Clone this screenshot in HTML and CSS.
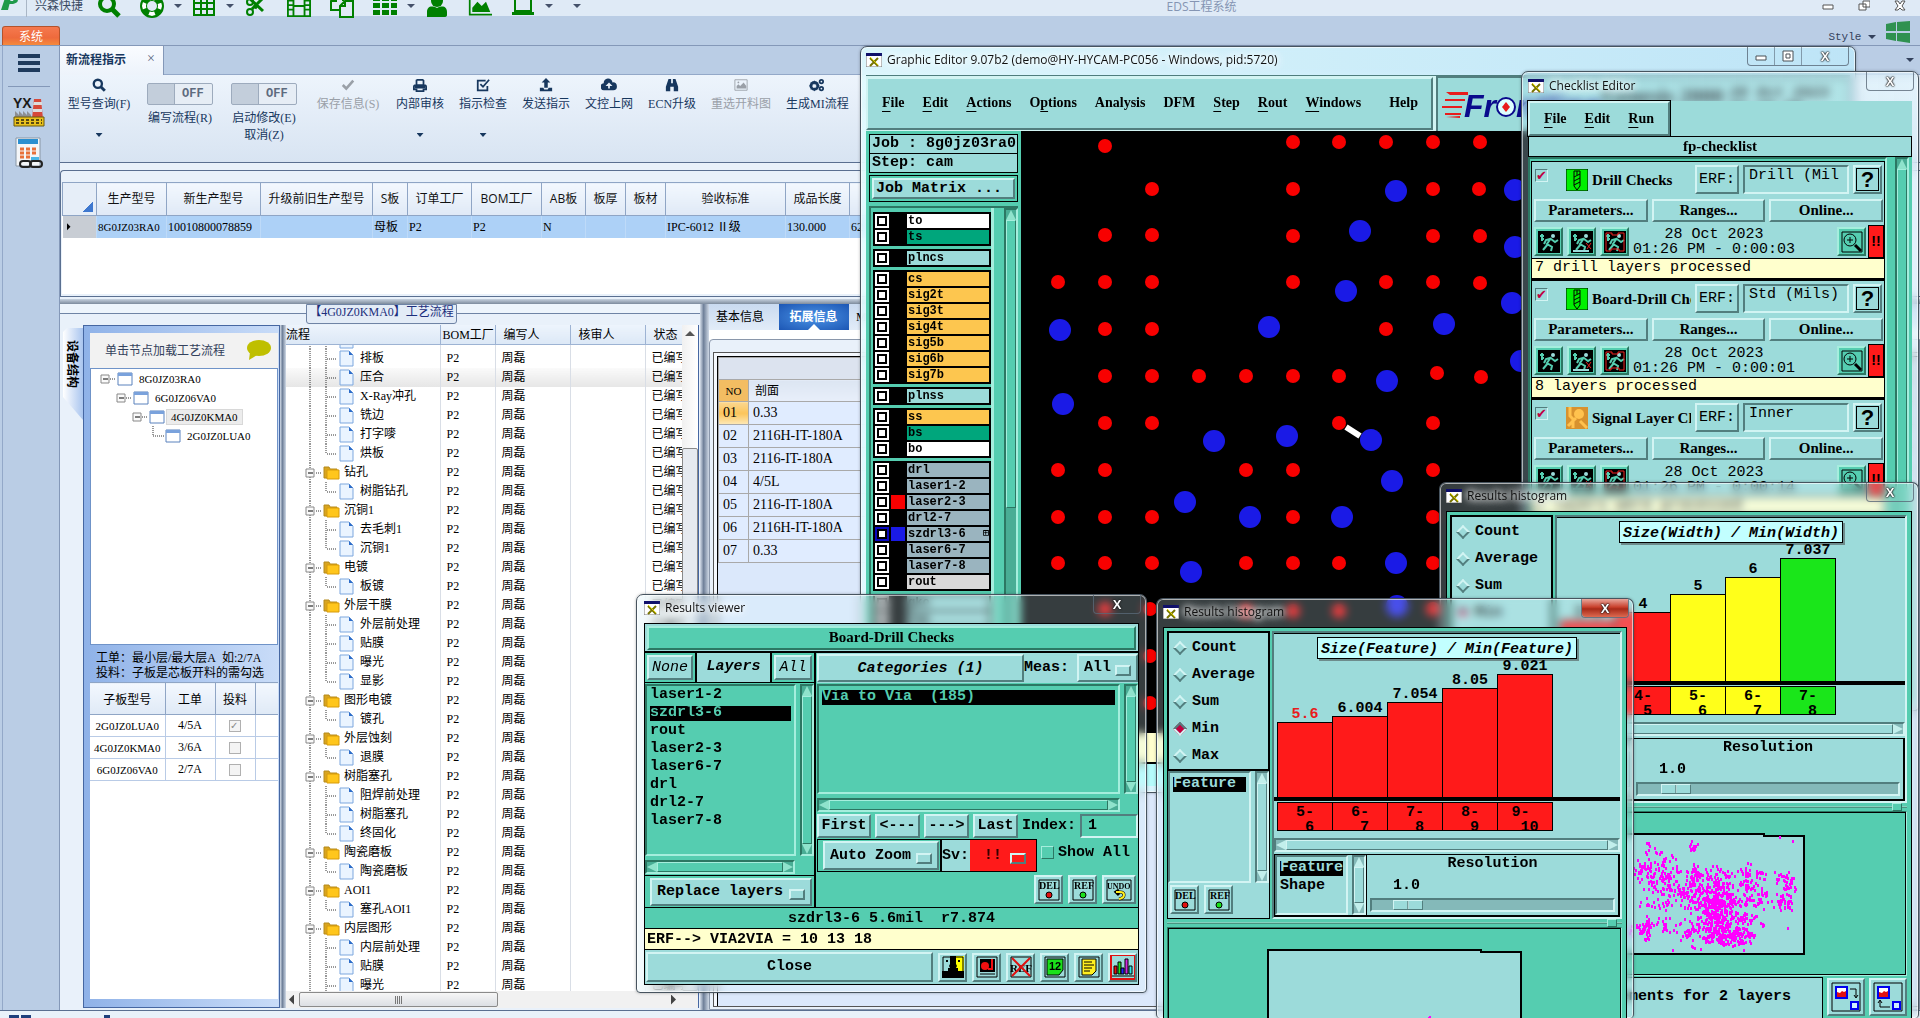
FILE: index.html
```html
<!DOCTYPE html>
<html lang="zh-CN">
<head>
    <meta charset="UTF-8">
    <meta name="viewport" content="width=device-width, initial-scale=1.0">
    <title>EDS工程系统</title>
    <link rel="stylesheet" href="styles.css">
</head>
<body>
    <svg class="sprite" aria-hidden="true">
        <symbol id="i-search" viewBox="0 0 24 24"><circle cx="10" cy="10" r="7" fill="none" stroke="currentColor" stroke-width="4"/><path d="M15 15l7 7" stroke="currentColor" stroke-width="5"/></symbol>
        <symbol id="i-ring" viewBox="0 0 24 24"><circle cx="12" cy="12" r="8" fill="none" stroke="currentColor" stroke-width="6"/><circle cx="12" cy="12" r="8" fill="none" stroke="#fff" stroke-width="4" stroke-dasharray="6 6.57" stroke-dashoffset="3"/><circle cx="12" cy="12" r="11" fill="none" stroke="currentColor" stroke-width="2"/></symbol>
        <symbol id="i-table" viewBox="0 0 24 24"><path d="M2 3h20v18H2zM2 9h20M2 15h20M9 3v18M15 3v18" fill="none" stroke="currentColor" stroke-width="2"/></symbol>
        <symbol id="i-cut" viewBox="0 0 24 24"><path d="M4 3l15 14M20 3L8 15M9 12l4 2" fill="none" stroke="currentColor" stroke-width="3"/><circle cx="6" cy="18" r="3" fill="none" stroke="currentColor" stroke-width="2"/><circle cx="6" cy="8" r="3" fill="none" stroke="currentColor" stroke-width="2"/></symbol>
        <symbol id="i-film" viewBox="0 0 26 24"><path d="M1 1h24v22H1zM7 1v22M19 1v22M7 12h12M1 6h6M1 11h6M1 16h6M19 6h6M19 11h6M19 16h6" fill="none" stroke="currentColor" stroke-width="2"/></symbol>
        <symbol id="i-copy" viewBox="0 0 24 24"><path d="M9 16H1V7l5-5h7v5M6 2v5H1M10 12l5-5h8v16H10zM15 7v5h-5" fill="none" stroke="currentColor" stroke-width="2"/></symbol>
        <symbol id="i-grid" viewBox="0 0 24 24"><path d="M0 2h7v5H0zM9 2h7v5H9zM18 2h6v5h-6zM0 9h7v5H0zM9 9h7v5H9zM18 9h6v5h-6zM0 16h7v5H0zM9 16h7v5H9zM18 16h6v5h-6z" fill="currentColor"/></symbol>
        <symbol id="i-user" viewBox="0 0 24 24"><circle cx="12" cy="7" r="6" fill="currentColor"/><path d="M2 23v-5c0-5 4-7 10-4c6-3 10-1 10 4v3q0 2-3 2z" fill="currentColor"/></symbol>
        <symbol id="i-chart" viewBox="0 0 28 24"><path d="M2 0v22h26" fill="none" stroke="currentColor" stroke-width="2"/><path d="M5 19v-5l6-7 5 5 5-5 5 12z" fill="currentColor"/></symbol>
        <symbol id="i-laptop" viewBox="0 0 24 24"><path d="M4 2h16v15H4z" fill="none" stroke="currentColor" stroke-width="2"/><path d="M1 18h22v3H1z" fill="currentColor"/></symbol>
        <symbol id="i-check" viewBox="0 0 16 16"><path d="M2 8l4 4 8-9" fill="none" stroke="currentColor" stroke-width="3"/></symbol>
        <symbol id="i-print" viewBox="0 0 16 16"><path d="M4 2h7l1 1v5M4 8V2M3 8h10q2 0 2 2v3h-3v2H4v-2H1v-3q0-2 2-2z" fill="none" stroke="currentColor" stroke-width="2"/><path d="M2 8h12v4H2z" fill="currentColor"/></symbol>
        <symbol id="i-tick" viewBox="0 0 16 16"><path d="M13 9v5H2V3h9" fill="none" stroke="currentColor" stroke-width="2"/><path d="M5 7l3 3 7-8" fill="none" stroke="currentColor" stroke-width="2"/></symbol>
        <symbol id="i-up" viewBox="0 0 16 16"><path d="M8 0l5 5h-3v6H6V5H3zM1 11h4l1 2h4l1-2h4v4H1z" fill="currentColor"/></symbol>
        <symbol id="i-cloud" viewBox="0 0 18 16"><path d="M4 14a4 4 0 0 1-1-8a5 5 0 0 1 10-1a4 4 0 0 1 1 9z" fill="currentColor"/><path d="M9 5l4 4h-3v3H8V9H5z" fill="#e8f0f9"/></symbol>
        <symbol id="i-bino" viewBox="0 0 16 16"><path d="M4 1h3v5h2V1h3l3 9v5h-5v-5H6v5H1v-5z" fill="currentColor"/></symbol>
        <symbol id="i-image" viewBox="0 0 16 16"><path d="M1 2h14v12H1z" fill="none" stroke="currentColor"/><path d="M3 12V9l2-2 2 2 4-4 3 4v3z" fill="currentColor"/><circle cx="5" cy="5" r="1" fill="currentColor"/></symbol>
        <symbol id="i-gears" viewBox="0 0 18 16"><circle cx="6" cy="9" r="4" fill="none" stroke="currentColor" stroke-width="3"/><path d="M6 3v12M0 9h12M2 5l8 8M10 5l-8 8" stroke="currentColor"/><circle cx="6" cy="9" r="2" fill="#e8f0f9"/><circle cx="14" cy="4" r="2" fill="none" stroke="currentColor" stroke-width="2"/><circle cx="14" cy="12" r="2" fill="none" stroke="currentColor" stroke-width="2"/></symbol>
        <symbol id="i-x" viewBox="0 0 16 14"><path d="M0 0h16v14H0z" fill="#fff" stroke="#777"/><path d="M0 0h16v3H0z" fill="#10106a"/><path d="M4 5l8 8M12 5l-8 8" stroke="#777400" stroke-width="2"/><path d="M4 4l8 8" stroke="#ddd200"/></symbol>
        <symbol id="i-file" viewBox="0 0 15 17"><path d="M1 1h9l4 4v11H1z" fill="#eaf4ff" stroke="#7da7de"/><path d="M10 1v4h4z" fill="#2d6cc8"/></symbol>
        <symbol id="i-folder" viewBox="0 0 17 15"><path d="M1 2h5l1 2h7v9H1z" fill="#d9a520" stroke="#b58a1c"/><path d="M4 5h12v9H4z" fill="#ffc61c" stroke="#d79b0a"/></symbol>
        <symbol id="i-form" viewBox="0 0 16 14"><path d="M1 1h14v12H1z" fill="#fff" stroke="#5a82bd"/><path d="M1 1h14v3H1z" fill="#7aa2dc"/></symbol>
        <symbol id="t-node" viewBox="0 0 36 19"><path d="M24 0v19M30 10h7" stroke="#333" stroke-dasharray="1 1" fill="none"/><path d="M20 6h8v8h-8z" fill="#fafafa" stroke="#888"/><path d="M22 10h5" stroke="#000"/></symbol>
        <symbol id="t-tee" viewBox="0 0 53 19"><path d="M24 0v19M40 0v19M41 10h10" stroke="#333" stroke-dasharray="1 1" fill="none"/></symbol>
        <symbol id="t-end" viewBox="0 0 53 19"><path d="M24 0v19M40 0v10M41 10h10" stroke="#333" stroke-dasharray="1 1" fill="none"/></symbol>
        <symbol id="t-box" viewBox="0 0 16 19"><path d="M10 10h6" stroke="#333" stroke-dasharray="1 1"/><path d="M1 6h8v8H1z" fill="#fafafa" stroke="#888"/><path d="M3 10h5" stroke="#000"/></symbol>
        <symbol id="t-leaf" viewBox="0 0 16 19"><path d="M5 0v10h11" fill="none" stroke="#333" stroke-dasharray="1 1"/></symbol>
        <symbol id="m-drill" viewBox="0 0 22 22"><path d="M0 0h22v22H0z" fill="#00f000" stroke="#000"/><path d="M8 2h6v15l-3 4-3-4zM8 8l6-3M8 12l6-3M8 16l6-3M11 2v4" fill="#00f000" stroke="#000"/></symbol>
        <symbol id="m-signal" viewBox="0 0 22 22"><path d="M0 0h22v22H0z" fill="#d8922e"/><circle cx="13" cy="7" r="5" fill="#ffc24e"/><path d="M4 0v9l3 3v9M10 11l-8 8M14 14l7 7" fill="none" stroke="#ffc24e" stroke-width="3"/></symbol>
        <symbol id="m-run" viewBox="0 0 22 22"><path d="M0 0h22v22H0z"/><circle cx="15" cy="5" r="2" fill="#9cdbda"/><path d="M13 7l-4 6 5 3-1 4M10 13l-5 6M13 8l4 3 3-2M12 8L8 9l-2 4M2 5h4M3 8h3M4 3v7" fill="none" stroke="#55cdb0" stroke-width="2"/></symbol>
        <symbol id="m-run2" viewBox="0 0 22 22"><use href="#m-run"/><path d="M2 20h16" stroke="#9cdbda" stroke-width="2"/><path d="M15 12l5 6M20 12l-4 6" stroke="#e02020"/></symbol>
        <symbol id="m-run3" viewBox="0 0 22 22"><use href="#m-run"/><path d="M2 2h6v2h6V2h6v18h-5v-2H7v2H2z" fill="none" stroke="#f02020"/></symbol>
        <symbol id="m-zoom" viewBox="0 0 22 22"><path d="M1 1h20v20H1z" fill="none" stroke="#000"/><circle cx="9" cy="9" r="6" fill="none" stroke="#000"/><path d="M9 6v6M6 9h6" stroke="#000"/><path d="M14 14l6 6" stroke="#000" stroke-width="3"/></symbol>
        <symbol id="m-face" viewBox="0 0 22 22"><path d="M0 0h22v22H0z" fill="#9cdbda"/><path d="M14 0h8v16h-8z" fill="#ff0"/><path d="M8 0h6v8l1 2-1 2h2v3h6v7H0v-7h6v-3h2l-1-2 1-2z"/><path d="M1 1h20v20H1z" fill="none" stroke="#000"/><path d="M4 5h2M16 5h2" stroke="#000" stroke-width="2"/></symbol>
        <symbol id="m-pane" viewBox="0 0 22 22"><path d="M1 1h20v20H1z" fill="none" stroke="#000"/><path d="M4 3h15v13H4z"/><circle cx="9" cy="10" r="4" fill="#f01010"/><path d="M16 3v10h-4" stroke="#f01010" stroke-width="2" fill="none"/><path d="M4 18h15" stroke="#000"/></symbol>
        <symbol id="m-noref" viewBox="0 0 22 22"><path d="M1 1h20v20H1z" fill="none" stroke="#000"/><text x="0" y="16" font-family="Liberation Serif" font-size="11">REF</text><path d="M2 2l18 18M20 2L2 20" stroke="#e01010" stroke-width="2"/></symbol>
        <symbol id="m-12" viewBox="0 0 22 22"><path d="M1 1h20v20H1z" fill="none" stroke="#000"/><path d="M3 3h16v11l-4 5H3z" fill="#1be01b" stroke="#000"/><text x="5" y="14" font-family="Liberation Sans" font-weight="bold" font-size="11">12</text></symbol>
        <symbol id="m-note" viewBox="0 0 22 22"><path d="M1 1h20v20H1z" fill="none" stroke="#000"/><path d="M4 3h14v12l-4 4H4z" fill="#ffef20" stroke="#000"/><path d="M6 6h8M6 9h10M6 12h8M6 15h6" stroke="#000"/></symbol>
        <symbol id="m-bars" viewBox="0 0 22 22"><path d="M0 0h22v22H0z" fill="#9cdbda"/><path d="M2 10h3v8H2z" fill="#e01010" stroke="#000"/><path d="M6 6h3v12H6z" fill="#1be01b" stroke="#000"/><path d="M9 12h3v6H9z" fill="#22f" stroke="#000"/><path d="M13 3h3v15h-3z" fill="#d02be0" stroke="#000"/><path d="M17 10h3v8h-3z" fill="#2ee6e6" stroke="#000"/><path d="M0 20h22" stroke="#000"/></symbol>
        <symbol id="m-del" viewBox="0 0 22 22"><path d="M1 1h20v20H1z" fill="none" stroke="#000"/><text x="1" y="10" font-family="Liberation Serif" font-size="10">DEL</text><circle cx="11" cy="16" r="3" fill="#e01010" stroke="#000"/></symbol>
        <symbol id="m-ref" viewBox="0 0 22 22"><path d="M1 1h20v20H1z" fill="none" stroke="#000"/><text x="2" y="10" font-family="Liberation Serif" font-size="10">REF</text><circle cx="11" cy="16" r="3" fill="#1be01b" stroke="#000"/></symbol>
        <symbol id="m-undo" viewBox="0 0 26 22"><path d="M1 1h24v20H1z" fill="none" stroke="#000"/><text x="1" y="10" font-family="Liberation Serif" font-size="8">UNDO</text><path d="M10 13h4q4 0 4 3t-5 4M13 11l-3 2 3 3" fill="none" stroke="#000" stroke-width="3"/><path d="M10 13h4q4 0 4 3t-5 4" fill="none" stroke="#ffef20" stroke-width="2"/></symbol>
        <symbol id="m-next" viewBox="0 0 30 30"><path d="M1 1h28v28H1z" fill="none" stroke="#000"/><path d="M5 5h11v11H5z" fill="#e01010" stroke="#00e" stroke-width="2"/><path d="M6 6h9v3l-2 1-2-1-2 2-3-1z" fill="#fff"/><path d="M20 20h7v7h-7z" fill="#cfeeff" stroke="#00e" stroke-width="2"/><path d="M19 7h6v8M23 13l2 3 2-3" fill="none" stroke="#000"/></symbol>
        <symbol id="m-prev" viewBox="0 0 30 30"><path d="M1 1h28v28H1z" fill="none" stroke="#000"/><path d="M5 5h11v11H5z" fill="#e01010" stroke="#00e" stroke-width="2"/><path d="M6 6h9v3l-2 1-2-1-2 2-3-1z" fill="#fff"/><path d="M20 20h7v7h-7z" fill="#cfeeff" stroke="#00e" stroke-width="2"/><path d="M17 25H7v-6M5 21l2-3 2 3" fill="none" stroke="#000"/></symbol>
    </svg>

    <div class="app">
        <header class="quickbar">
            <svg class="logo" viewBox="0 0 20 16"><path d="M5 0h6l-3 12H1z" fill="#1f9a4a"/><path d="M10 0h7q3 4-4 6H8l1-3h4l1-2z" fill="#1f9a4a"/></svg>
            <span class="brand">兴森快捷</span>
            <button class="qb wide" aria-label="查询"><svg><use href="#i-search"/></svg></button>
            <button class="qb" aria-label="帮助"><svg><use href="#i-ring"/></svg></button>
            <button class="caret" aria-label="更多帮助"></button>
            <button class="qb" aria-label="表格"><svg><use href="#i-table"/></svg></button>
            <button class="caret" aria-label="更多表格"></button>
            <button class="qb wide" aria-label="剪切"><svg><use href="#i-cut"/></svg></button>
            <button class="qb wide" aria-label="胶片"><svg><use href="#i-film"/></svg></button>
            <button class="qb wide" aria-label="复制"><svg><use href="#i-copy"/></svg></button>
            <button class="qb" aria-label="矩阵"><svg><use href="#i-grid"/></svg></button>
            <button class="caret" aria-label="更多矩阵"></button>
            <button class="qb wide" aria-label="用户"><svg><use href="#i-user"/></svg></button>
            <button class="qb wide" aria-label="图表"><svg><use href="#i-chart"/></svg></button>
            <button class="qb" aria-label="终端"><svg><use href="#i-laptop"/></svg></button>
            <button class="caret" aria-label="更多终端"></button>
            <button class="caret more" aria-label="自定义"></button>
            <span class="app-title">EDS工程系统</span>
            <div class="app-controls">
                <button aria-label="最小化"><svg viewBox="0 0 12 12"><path d="M1 5h10v4H1z" fill="#fff" stroke="#555"/></svg></button>
                <button aria-label="还原"><svg viewBox="0 0 12 12"><path d="M5 1h7v6H5zM1 4h7v6H1z" fill="#fff" stroke="#555"/></svg></button>
                <button aria-label="关闭"><svg viewBox="0 0 12 12"><path d="M1 1h3l2 3 2-3h3L8 6l3 4H8L6 8l-2 2H1l3-4z" fill="#fff" stroke="#555"/></svg></button>
            </div>
        </header>
        <div class="caption">
            <button class="sys-tab">系统</button>
            <span class="style-menu">Style <i class="down"></i></span>
            <svg class="win-logo" viewBox="0 0 24 22"><path d="M0 3l10-2v9H0zM11 1l13-1v10H11zM0 12h10v8L0 18zM11 12h13v10l-13-2z" fill="#2f9150"/></svg>
        </div>
        <div class="workspace">
            <nav class="sidebar">
                <button class="burger" aria-label="菜单"></button>
                <hr>
                <button aria-label="工厂"><svg viewBox="0 0 32 32"><path d="M21 4h7l2 20H19z" fill="#d6493a"/><path d="M21 7h8v3h-9zM20 14h9v3h-9z" fill="#ddd"/><path d="M2 24v-8l4 4v-4l4 4v-4l4 4v-4l4 4v4z" fill="#8d8f94"/><path d="M1 22h30v9H1z" fill="#e9c11b" stroke="#6a5a10"/><path d="M3 25h26M3 28h26" stroke="#5a4a10" stroke-dasharray="3 2" stroke-width="2"/><text x="0" y="13" font-family="Liberation Sans" font-weight="bold" font-size="14" fill="#1a1a1a">YX</text></svg></button>
                <button aria-label="计划"><svg viewBox="0 0 32 32"><path d="M3 1h24v28H3z" fill="#f4f6f8" stroke="#8a97a5"/><path d="M5 2h20v5H5z" fill="#2b8fd0"/><path d="M7 12h18M7 16h18M7 20h10" stroke="#e8703a" stroke-width="3" stroke-dasharray="4 2"/><path d="M18 20h8v5h-8z" fill="#49b6e8"/><rect x="7" y="24" width="11" height="6" rx="3" fill="none" stroke="#222" stroke-width="2"/><rect x="17" y="24" width="12" height="6" rx="3" fill="none" stroke="#222" stroke-width="2"/></svg></button>
            </nav>
            <main class="main">
                <div class="doc-tabs">
                    <div class="doc-tab"><b>新流程指示</b><button aria-label="关闭标签">×</button></div>
                    <i class="down"></i>
                </div>
                <div class="ribbon">
                    <button class="rb dd long"><svg><use href="#i-search"/></svg>型号查询(F)</button>
                    <label class="rb sw"><input type="checkbox"><span class="switch">OFF</span>编写流程(R)</label>
                    <label class="rb sw second"><input type="checkbox"><span class="switch">OFF</span>启动修改(E)<br>取消(Z)</label>
                    <button class="rb long" disabled><svg><use href="#i-check"/></svg>保存信息(S)</button>
                    <button class="rb dd"><svg><use href="#i-print"/></svg>内部审核</button>
                    <button class="rb dd"><svg><use href="#i-tick"/></svg>指示检查</button>
                    <button class="rb"><svg><use href="#i-up"/></svg>发送指示</button>
                    <button class="rb"><svg><use href="#i-cloud"/></svg>文控上网</button>
                    <button class="rb"><svg><use href="#i-bino"/></svg>ECN升级</button>
                    <button class="rb" disabled><svg><use href="#i-image"/></svg>重选开料图</button>
                    <button class="rb"><svg><use href="#i-gears"/></svg>生成MI流程</button>
                    <button class="rb"><svg></svg>MI</button>
                </div>
                <section class="models">
                    <div class="models-box">
                        <table class="model-table">
                            <thead>
                                <tr><th class="corner"></th><th>生产型号</th><th>新生产型号</th><th>升级前旧生产型号</th><th>S板</th><th>订单工厂</th><th>BOM工厂</th><th>AB板</th><th>板厚</th><th>板材</th><th>验收标准</th><th>成品长度</th><th></th></tr>
                            </thead>
                            <tbody>
                                <tr><td class="mark"><i></i></td><td class="code">8G0JZ03RA0</td><td>10010800078859</td><td></td><td>母板</td><td>P2</td><td>P2</td><td>N</td><td></td><td></td><td>IPC-6012 Ⅱ级</td><td>130.000</td><td>62</td></tr>
                            </tbody>
                        </table>
                    </div>
                </section>
                <div class="hsplit"></div>
                <div class="lower">
                    <section class="flow">
                        <h2 class="flow-title">【4G0JZ0KMA0】工艺流程</h2>
                        <div class="flow-row">
                            <div class="vtab">设备结构</div>
                            <div class="device">
                                <div class="device-head"><span>单击节点加载工艺流程</span><svg viewBox="0 0 24 20"><ellipse cx="12" cy="8" rx="12" ry="8" fill="#bfbf00"/><path d="M3 12l-1 8 8-5z" fill="#bfbf00"/></svg></div>
                                <ul class="device-tree">
                                    <li><svg class="knot"><use href="#t-box"/></svg><svg class="form"><use href="#i-form"/></svg><span>8G0JZ03RA0</span></li>
                                    <li class="d1"><svg class="knot"><use href="#t-box"/></svg><svg class="form"><use href="#i-form"/></svg><span>6G0JZ06VA0</span></li>
                                    <li class="d2"><svg class="knot"><use href="#t-box"/></svg><svg class="form"><use href="#i-form"/></svg><span class="on">4G0JZ0KMA0</span></li>
                                    <li class="d3"><svg class="knot"><use href="#t-leaf"/></svg><svg class="form"><use href="#i-form"/></svg><span>2G0JZ0LUA0</span></li>
                                </ul>
                                <p class="hint">工单：最小层/最大层A&nbsp; 如:2/7A<br>投料：子板是芯板开料的需勾选</p>
                                <div class="sub-box">
                                    <table class="sub-table">
                                        <thead><tr><th>子板型号</th><th>工单</th><th>投料</th><th></th></tr></thead>
                                        <tbody>
                                            <tr><td class="code">2G0JZ0LUA0</td><td>4/5A</td><td><input type="checkbox" checked disabled aria-label="投料"></td><td></td></tr>
                                            <tr><td class="code">4G0JZ0KMA0</td><td>3/6A</td><td><input type="checkbox" disabled aria-label="投料"></td><td></td></tr>
                                            <tr><td class="code">6G0JZ06VA0</td><td>2/7A</td><td><input type="checkbox" disabled aria-label="投料"></td><td></td></tr>
                                        </tbody>
                                    </table>
                                </div>
                            </div>
                            <div class="vsplit thin"></div>
                            <div class="process">
                                <div class="process-view">
                                    <table class="process-table">
                                        <thead><tr><th>流程</th><th>BOM工厂</th><th>编写人</th><th>核审人</th><th>状态</th></tr></thead>
                                        <tbody id="process-rows"></tbody>
                                    </table>
                                    <div class="vbar"><i></i></div>
                                </div>
                                <div class="hbar"><i class="l"></i><b></b><i class="r"></i></div>
                            </div>
                        </div>
                    </section>
                    <div class="vsplit"></div>
                    <section class="extra">
                        <div class="tabs"><button>基本信息</button><button class="on">拓展信息</button><button>M</button></div>
                        <div class="extra-frame">
                            <div class="extra-box">
                                <table class="stack-table">
                                    <colgroup><col class="no-col"><col></colgroup>
                                    <thead><tr class="blank"><th colspan="2"></th></tr><tr><th class="no">NO</th><th>剖面</th></tr></thead>
                                    <tbody id="stack-rows"></tbody>
                                </table>
                            </div>
                        </div>
                    </section>
                </div>
            </main>
        </div>
        <footer class="statusbar"><i></i><i></i><i class="gap"></i></footer>
    </div>

    <!-- Graphic Editor -->
    <div class="win editor">
        <div class="titlebar"><svg><use href="#i-x"/></svg><span>Graphic Editor 9.07b2 (demo@HY-HYCAM-PC056 - Windows, pid:5720)</span>
            <div class="controls"><button aria-label="Minimize"><svg viewBox="0 0 14 14"><path d="M2 7h10v4H2z" fill="#fff" stroke="#4b5157"/></svg></button><button aria-label="Maximize"><svg viewBox="0 0 14 14"><path d="M2 2h10v10H2zM5 5h4v4H5z" fill="#fff" stroke="#4b5157"/></svg></button><button class="close" aria-label="Close">X</button></div>
        </div>
        <div class="win-body">
            <div class="editor-top">
                <nav class="menubar">
                    <button><u>F</u>ile</button><button><u>E</u>dit</button><button><u>A</u>ctions</button><button>O<u>p</u>tions</button><button>Analysis</button><button>DFM</button><button><u>S</u>tep</button><button><u>R</u>out</button><button><u>W</u>indows</button><button class="help">Help</button>
                </nav>
                <div class="brandbox">
                    <svg class="frontline" viewBox="0 0 160 40"><path d="M4 6h22v3H8zM3 13h20v2H3zM0 20h20v2H0zM3 27h16v2H3zM4 31l14-1v2z" fill="#e81c1c"/><text x="22" y="31" font-family="Liberation Sans" font-weight="bold" font-style="italic" font-size="32" fill="#0a0a8c">Fr</text><text x="74" y="31" font-family="Liberation Sans" font-weight="bold" font-style="italic" font-size="32" fill="#0a0a8c">ntline</text><circle cx="64" cy="21" r="9" fill="#dff" stroke="#0a0a8c" stroke-width="2"/><path d="M64 16l4 5-4 5-4-5z" fill="#e81c1c"/></svg>
                    <b>Genesis 2000</b><em>28 Oct 2023<br>01:30 PM</em>
                </div>
            </div>
            <div class="editor-mid">
                <aside class="layers">
                    <div class="info">Job : 8g0jz03ra0</div>
                    <div class="info">Step: cam</div>
                    <div class="matrix"><button>Job Matrix ...</button></div>
                    <div class="layer-area">
                        <div class="layer-list" id="layer-list"></div>
                        <div class="sb green v"><i></i></div>
                    </div>
                </aside>
                <div class="canvas"><svg id="drill-map" width="500" height="600"></svg></div>
            </div>
            <div class="editor-msg"></div>
            <div class="editor-foot"></div>
        </div>
    </div>

    <!-- Checklist Editor -->
    <div class="win checklist">
        <div class="titlebar"><svg><use href="#i-x"/></svg><span>Checklist Editor</span><div class="controls"><button class="close" aria-label="Close">X</button></div></div>
        <div class="win-body">
            <nav class="menubar short"><button><u>F</u>ile</button><button><u>E</u>dit</button><button><u>R</u>un</button></nav>
            <div class="list-name">fp-checklist</div>
            <div class="check-area">
                <div class="check-list" id="check-list"></div>
                <div class="sb green v"><i></i></div>
            </div>
        </div>
    </div>

    <div class="win hist two" id="hist-width"></div>
    <div class="win hist one" id="hist-feature"></div>

    <!-- Results viewer -->
    <div class="win results">
        <div class="titlebar"><svg><use href="#i-x"/></svg><span>Results viewer</span><div class="controls"><button class="close" aria-label="Close">X</button></div></div>
        <div class="win-body">
            <div class="banner"><div>Board-Drill Checks</div></div>
            <div class="rv-main">
                <div class="rv-left">
                    <div class="rv-head"><span class="cell"><button class="btn it">None</button></span><b>Layers</b><span class="cell"><button class="btn it">All</button></span></div>
                    <div class="scrolled">
                        <ul class="listbox"><li>laser1-2</li><li class="on">szdrl3-6</li><li>rout</li><li>laser2-3</li><li>laser6-7</li><li>drl</li><li>drl2-7</li><li>laser7-8</li></ul>
                        <div class="sb green v"><i></i></div>
                    </div>
                    <div class="sb green h"><i></i></div>
                    <div class="rv-replace"><span class="opt"><select aria-label="Layer mode"><option>Replace layers</option></select></span></div>
                </div>
                <div class="rv-right">
                    <div class="rv-head cats"><button class="btn bi">Categories (1)</button><label for="meas">Meas:</label><span class="opt"><select id="meas"><option>All</option></select></span></div>
                    <div class="scrolled">
                        <ul class="listbox"><li class="on">Via to Via&nbsp; (185)</li></ul>
                        <div class="sb green v"><i></i></div>
                    </div>
                    <div class="sb green h"><i></i></div>
                    <div class="rv-nav"><button class="btn">First</button><button class="btn">&lt;---</button><button class="btn">---&gt;</button><button class="btn">Last</button><label for="index">Index:</label><input id="index" class="field" type="text" value="1"></div>
                    <div class="rv-zoom"><span class="frame"><span class="opt"><select aria-label="Zoom"><option>Auto Zoom</option></select></span></span><span class="frame sv"><label for="sv">Sv:</label><span class="opt red"><select id="sv"><option>!!</option></select></span></span><label class="show-all"><input type="checkbox">Show All</label></div>
                    <div class="rv-icons"><button class="ib" aria-label="Delete"><svg><use href="#m-del"/></svg></button><button class="ib" aria-label="Reference"><svg><use href="#m-ref"/></svg></button><button class="ib big" aria-label="Undo"><svg><use href="#m-undo"/></svg></button></div>
                </div>
            </div>
            <div class="rv-status">szdrl3-6 5.6mil&nbsp; r7.874</div>
            <div class="rv-erf">ERF--&gt; VIA2VIA = 10 13 18</div>
            <div class="rv-foot"><button class="btn">Close</button><button class="ib" aria-label="Highlight"><svg><use href="#m-face"/></svg></button><button class="ib" aria-label="Snapshot"><svg><use href="#m-pane"/></svg></button><button class="ib" aria-label="No reference"><svg><use href="#m-noref"/></svg></button><button class="ib" aria-label="Count"><svg><use href="#m-12"/></svg></button><button class="ib" aria-label="Notes"><svg><use href="#m-note"/></svg></button><button class="ib hot" aria-label="Histogram"><svg><use href="#m-bars"/></svg></button></div>
        </div>
    </div>

    <script src="script.js"></script>
</body>
</html>
```
FILE: styles.css
```css
* {
    box-sizing: border-box;
}

html, body {
    height: 100%;
    margin: 0;
    overflow: hidden;
}

body {
    font-family: "Liberation Serif", "Noto Sans CJK SC", serif;
    font-size: 12px;
    color: #000;
    background: #dce8f8;
}

button, input, select {
    font: inherit;
    color: inherit;
    margin: 0;
    padding: 0;
    border: 0;
    background: none;
    border-radius: 0;
}

ul, p, h2 {
    margin: 0;
    padding: 0;
    list-style: none;
}

table {
    border-collapse: collapse;
    table-layout: fixed;
}

.sprite {
    display: none;
}

.code {
    font-size: 11px;
}

/* main application */
.app {
    height: 100%;
    display: flex;
    flex-direction: column;
    background: #bacde5;
}

.quickbar {
    height: 16px;
    padding-bottom: 4px;
    display: flex;
    align-items: center;
    gap: 10px;
    background: #dfeaf6;
    flex: none;
}

.logo {
    width: 20px;
    height: 16px;
}

.brand {
    border-left: 1px solid #a9b6c6;
    padding-left: 8px;
    margin: 0 4px 0 -4px;
    color: #3b4a63;
    line-height: 22px;
}

.qb {
    color: #008000;
    width: 24px;
    height: 24px;
}

.qb.wide {
    margin-right: 9px;
}

.qb svg {
    width: 24px;
    height: 24px;
    display: block;
}

.caret {
    width: 8px;
    height: 4px;
    background: #44516a;
    clip-path: polygon(0 0, 100% 0, 50% 100%);
}

.caret.more {
    margin-left: 10px;
}

.app-title {
    flex: 1;
    text-align: center;
    color: #8595b3;
    font-family: "Open Sans", "Noto Sans CJK SC", sans-serif;
}

.app-controls {
    display: flex;
    gap: 24px;
    padding-right: 14px;
}

.app-controls button, .app-controls svg {
    width: 12px;
    height: 12px;
    display: block;
}

.caption {
    height: 30px;
    display: flex;
    align-items: flex-end;
    padding: 0 10px 0 2px;
    border-bottom: 1px solid #8498b8;
    flex: none;
}

.sys-tab {
    width: 58px;
    height: 19px;
    color: #fff;
    border: 1px solid #b4532c;
    border-bottom: 0;
    border-radius: 3px 3px 0 0;
    background: linear-gradient(#f5794f, #ee6a3c 60%, #f58a3c);
}

.style-menu {
    margin-left: auto;
    color: #33415c;
    line-height: 16px;
    font-family: "Liberation Mono", monospace;
    font-size: 11px;
}

.down {
    display: inline-block;
    width: 8px;
    height: 4px;
    background: #33415c;
    clip-path: polygon(0 0, 100% 0, 50% 100%);
    vertical-align: middle;
}

.win-logo {
    width: 24px;
    height: 22px;
    margin: 0 0 2px 10px;
}

.workspace {
    flex: 1;
    min-height: 0;
    display: flex;
}

.sidebar {
    width: 58px;
    margin-left: 2px;
    padding-right: 4px;
    border-left: 1px solid #93a8c8;
    border-right: 1px solid #8498b8;
    display: flex;
    flex-direction: column;
    align-items: center;
}

.sidebar svg {
    width: 32px;
    height: 32px;
    display: block;
    margin-bottom: 10px;
}

.burger {
    width: 22px;
    height: 18px;
    margin-top: 8px;
    background: linear-gradient(#1e3a5c 4px, transparent 4px, transparent 7px, #1e3a5c 7px, #1e3a5c 11px, transparent 11px, transparent 14px, #1e3a5c 14px);
}

.sidebar hr {
    width: 42px;
    height: 1px;
    border: 0;
    background: #8498b8;
    margin: 14px 0 8px;
}

.main {
    flex: 1;
    min-width: 0;
    display: flex;
    flex-direction: column;
    background: #e9f1fa;
}

.doc-tabs {
    height: 29px;
    background: #bacde5;
    display: flex;
    justify-content: space-between;
    align-items: center;
    border-bottom: 1px solid #93a8c8;
    padding-right: 6px;
    flex: none;
}

.doc-tab {
    width: 104px;
    height: 29px;
    display: flex;
    align-items: center;
    justify-content: space-between;
    padding: 0 8px 2px 6px;
    background: linear-gradient(#fafcff, #edf3fb);
    border-right: 1px solid #8498b8;
    color: #17375e;
}

.doc-tab button {
    font-size: 14px;
    color: #55657d;
}

.ribbon {
    height: 88px;
    flex: none;
    display: flex;
    align-items: flex-start;
    gap: 15px;
    padding: 2px 0 0 6px;
    background: linear-gradient(#edf4fc, #d8e4f2);
    border-bottom: 1px solid #5a6f90;
    overflow: hidden;
    color: #17375e;
}

.rb {
    flex: none;
    display: flex;
    flex-direction: column;
    align-items: center;
    line-height: 17px;
    text-align: center;
    white-space: nowrap;
}

.rb.long {
    width: 66px;
}

.rb svg {
    width: 16px;
    height: 14px;
    margin: 1px 0 4px;
}

.rb.dd::after {
    content: "";
    width: 7px;
    height: 4px;
    margin-top: 20px;
    background: #17375e;
    clip-path: polygon(0 0, 100% 0, 50% 100%);
}

.rb:disabled {
    color: #9aa0a8;
}

.sw {
    width: 66px;
}

.sw.second {
    width: 72px;
}

.sw input {
    position: absolute;
    opacity: 0;
}

.switch {
    width: 66px;
    height: 22px;
    margin: 6px 0 5px;
    padding-left: 34px;
    text-align: left;
    font: bold 12px/20px "Liberation Mono", monospace;
    color: #5d6b7e;
    border: 1px solid #9dabbd;
    border-radius: 2px;
    background: linear-gradient(90deg, #c3cedb 26px, #9dabbd 26px, #9dabbd 27px, #e6edf5 27px);
}

.models {
    flex: none;
    padding: 7px 0 2px;
}

.models-box {
    height: 127px;
    border: 1px solid #5a6f90;
    border-right: 0;
    border-radius: 4px 0 0 0;
    padding: 11px 0 2px 1px;
    overflow: hidden;
}

.model-table {
    width: 1800px;
    line-height: 16px;
    background: #fff;
    box-shadow: 0 56px 0 #fff;
}

.model-table th {
    height: 33px;
    font-weight: normal;
    font-family: "Open Sans", "Noto Sans CJK SC", sans-serif;
    border: 1px solid #8fa5c5;
    background: linear-gradient(#f3f8fe, #dfe9f6);
    padding: 0;
    color: #111;
}

.model-table th:nth-child(1) { width: 34px; }
.model-table th:nth-child(2) { width: 70px; }
.model-table th:nth-child(3) { width: 94px; }
.model-table th:nth-child(4) { width: 112px; }
.model-table th:nth-child(5) { width: 35px; }
.model-table th:nth-child(6) { width: 64px; }
.model-table th:nth-child(7) { width: 70px; }
.model-table th:nth-child(8) { width: 44px; }
.model-table th:nth-child(9) { width: 40px; }
.model-table th:nth-child(10) { width: 40px; }
.model-table th:nth-child(11) { width: 120px; }
.model-table th:nth-child(12) { width: 64px; }

.model-table th.corner {
    background: linear-gradient(135deg, transparent 50%, #3f78cf 50%) no-repeat right 3px bottom 3px / 10px 10px, #e6eef8;
}

.model-table td {
    height: 22px;
    padding: 0 1px;
    background: #add1f7;
    border-right: 1px solid #bedaf8;
    white-space: nowrap;
}

.model-table td.mark {
    padding-left: 4px;
    background: #c8cdd4;
}

.mark i {
    display: block;
    width: 4px;
    height: 8px;
    background: #000;
    clip-path: polygon(0 0, 100% 50%, 0 100%);
}

.hsplit {
    height: 5px;
    flex: none;
    background: linear-gradient(#c7d2df, #7d8b9d);
}

.lower {
    flex: 1;
    min-height: 0;
    display: flex;
}

.flow {
    width: 640px;
    flex: none;
    display: flex;
    flex-direction: column;
    padding: 0 1px 2px 3px;
    background: linear-gradient(#eef5fc 9px, #6f84a5 9px, #6f84a5 10px, #e9f1fa 10px);
}

.flow-title {
    width: 151px;
    height: 20px;
    margin: 0 0 1px 243px;
    font-size: 12px;
    line-height: 15px;
    font-weight: normal;
    text-align: center;
    white-space: nowrap;
    color: #1c2f7c;
    background: #e3ecf7;
    border: 1px solid #6f84a5;
    border-radius: 0 0 3px 3px;
}

.flow-row {
    flex: 1;
    min-height: 0;
    display: flex;
}

.vtab {
    width: 20px;
    height: 92px;
    margin-top: 3px;
    padding: 12px 2px 0 0;
    writing-mode: vertical-rl;
    text-orientation: sideways;
    font-weight: bold;
    line-height: 18px;
    clip-path: polygon(0 4px, 4px 0, 100% 0, 100% 100%, 0 75%);
    background: linear-gradient(90deg, #fff, #a9c5ef);
}

.device {
    width: 197px;
    border: 1px solid #4667a2;
    background: linear-gradient(90deg, #8fb2e8, #c9dcf8);
    padding: 7px 1px 8px 6px;
    display: flex;
    flex-direction: column;
}

.device-head {
    height: 35px;
    display: flex;
    align-items: center;
    justify-content: space-between;
    padding: 0 7px 2px 15px;
    background: #f2f2f2;
    color: #33415c;
}

.device-head svg {
    width: 24px;
    height: 20px;
}

.device-tree {
    height: 277px;
    border: 1px solid #6f93c8;
    background: #fff;
    font-size: 11px;
}

.device-tree li {
    height: 19px;
    padding-left: 9px;
    display: flex;
    align-items: center;
}

.device-tree .d1 { padding-left: 25px; }
.device-tree .d2 { padding-left: 41px; }
.device-tree .d3 { padding-left: 57px; }

.knot {
    width: 16px;
    height: 19px;
}

.form {
    width: 16px;
    height: 14px;
    margin: 0 2px 0 1px;
}

.device-tree span {
    padding: 1px 4px;
}

.device-tree .on {
    background: #ececec;
    box-shadow: 0 0 0 1px #d8d8d8;
}

.hint {
    height: 37px;
    padding: 6px 0 0 6px;
    line-height: 15px;
    white-space: nowrap;
}

.sub-box {
    flex: 1;
    background: #fff;
    overflow: hidden;
}

.sub-table {
    width: 189px;
    text-align: center;
}

.sub-table th {
    height: 32px;
    font-weight: normal;
    border: 1px solid #8fa5c5;
    border-left: 0;
    background: linear-gradient(#f3f8fe, #dfe9f6);
}

.sub-table th:nth-child(1) { width: 75px; }
.sub-table th:nth-child(2) { width: 50px; }
.sub-table th:nth-child(3) { width: 40px; }

.sub-table td {
    height: 22px;
    padding: 0;
    border: 1px solid #b9cbe6;
    border-left: 0;
}

.sub-table input {
    appearance: none;
    display: block;
    width: 12px;
    height: 12px;
    margin: 0 auto;
    border: 1px solid #b0b0b0;
    background: #f4f4f4;
}

.sub-table input:checked::before {
    content: "✓";
    display: block;
    font: bold 10px/10px "DejaVu Sans", sans-serif;
    color: #888;
}

.vsplit {
    width: 9px;
    flex: none;
    background: linear-gradient(90deg, #d5deea, #6f8099 40%, #cfd9e6);
}

.vsplit.thin {
    width: 6px;
}

.process {
    flex: 1;
    min-width: 0;
    display: flex;
    flex-direction: column;
    background: #fff;
    border-right: 1px solid #4667a2;
}

.process-view {
    flex: 1;
    min-height: 0;
    display: flex;
    overflow: hidden;
}

.process-table {
    width: 396px;
    flex: none;
    height: 0;
}

.process-table th {
    height: 19px;
    padding: 0 0 0 8px;
    font-weight: normal;
    text-align: left;
    white-space: nowrap;
    border-right: 1px solid #9db3d3;
    border-bottom: 1px solid #9db3d3;
    background: linear-gradient(#edf4fc, #dce8f6);
}

.process-table th:nth-child(1) { width: 154px; padding-left: 0; }
.process-table th:nth-child(2) { width: 55px; padding-left: 2px; }
.process-table th:nth-child(3) { width: 75px; }
.process-table th:nth-child(4) { width: 75px; }
.process-table th:nth-child(5) { width: 37px; border-right: 0; }

.process-table td {
    height: 19px;
    padding: 0 0 0 6px;
    line-height: 17px;
    white-space: nowrap;
    overflow: hidden;
    border-right: 1px solid #d9dee6;
}

.process-table td:first-child {
    padding: 0;
}

.process-table td:last-child {
    border-right: 0;
}

.process-table .name {
    display: flex;
    align-items: center;
    height: 19px;
}

.process-table .cut td, .process-table .cut .name {
    height: 4px;
    overflow: hidden;
    align-items: flex-end;
    line-height: 1px;
}

.process-table .sel td {
    background: linear-gradient(#fafafa, #e6e6e6);
}

.name .file { width: 15px; height: 17px; margin-right: 6px; }
.name .folder { width: 17px; height: 15px; margin: 0 4px 0 1px; }
.name .leafline { width: 53px; height: 19px; }
.name .nodeline { width: 36px; height: 19px; }

.vbar {
    flex: 1;
    background: linear-gradient(90deg, #f0f0f0, #fff);
    padding-top: 6px;
    display: flex;
    flex-direction: column;
    align-items: center;
}

.vbar::after {
    content: "";
    width: 14px;
    flex: 1;
    margin-top: 112px;
    border: 1px solid #8a8a8a;
    border-radius: 2px;
    background: #e6eaf0;
}

.vbar i {
    width: 10px;
    height: 5px;
    background: #555;
    clip-path: polygon(50% 0, 100% 100%, 0 100%);
}

.hbar {
    height: 17px;
    flex: none;
    display: flex;
    align-items: center;
    padding: 0 22px 0 3px;
    background: #f1f1f1;
}

.hbar i {
    width: 5px;
    height: 10px;
    background: #444;
    clip-path: polygon(100% 0, 100% 100%, 0 50%);
}

.hbar i.r {
    margin-left: auto;
    clip-path: polygon(0 0, 100% 50%, 0 100%);
}

.hbar b {
    width: 199px;
    height: 15px;
    margin-left: 5px;
    border: 1px solid #8a8a8a;
    border-radius: 2px;
    background: repeating-linear-gradient(90deg, #777 0, #777 1px, transparent 1px, transparent 2px) no-repeat center / 7px 8px, linear-gradient(#f6f6f6, #dcdfe4);
}

.extra {
    flex: 1;
    min-width: 0;
    display: flex;
    flex-direction: column;
    background: #fff;
}

.tabs {
    height: 26px;
    flex: none;
    display: flex;
    background: linear-gradient(#c9daf0, #e2ecf8);
}

.tabs button {
    width: 70px;
    padding-right: 8px;
    line-height: 20px;
}

.tabs .on {
    position: relative;
    padding: 0 1px 0 0;
    color: #fff;
    font-weight: bold;
    background: radial-gradient(#4c94e6, #1c56b4);
}

.tabs .on::after {
    content: "";
    position: absolute;
    left: 29px;
    bottom: 0;
    border: 6px solid transparent;
    border-top: 0;
    border-bottom-color: #fff;
}

.tabs button:last-child {
    padding: 0 0 0 7px;
    text-align: left;
}

.extra-frame {
    flex: 1;
    margin-top: 9px;
    padding: 12px 0 2px 3px;
    border: 1px solid #8a97ab;
    border-radius: 4px 0 0 0;
    background: #e9f1fa;
}

.extra-box {
    height: 100%;
    padding: 4px;
    border: 1px solid #555;
    background: #dbe8fb;
    box-shadow: inset 3px 3px #f4f8fd, inset 4px 4px #000;
}

.stack-table {
    width: 100%;
    font-size: 14px;
}

.no-col {
    width: 30px;
}

.stack-table th, .stack-table td {
    height: 23px;
    padding: 0 4px;
    line-height: 16px;
    text-align: left;
    font-weight: normal;
    border: 1px solid #a9a9a9;
    background: #e0ecff;
}

.stack-table thead th {
    height: 22px;
    padding-left: 6px;
    font-size: 12px;
    background: linear-gradient(#dce5f2, #e8effa);
}

.stack-table .blank th {
    background: #dce3ef;
}

.stack-table thead .no {
    padding: 0;
    text-align: center;
    font-size: 11px;
    background: #f3bd62;
}

.stack-table .hot {
    background: linear-gradient(#fbd68e, #fbc55b 50%, #fde9b8);
}

.statusbar {
    height: 8px;
    flex: none;
    display: flex;
    gap: 2px;
    padding: 4px 0 0 9px;
    background: #e9f2fa;
    border-top: 1px solid #5a6f90;
}

.statusbar i {
    width: 10px;
    height: 4px;
    background: #1e3f7c;
}

.statusbar .gap {
    width: 6px;
    margin-left: 71px;
}

/* floating windows */
.win {
    position: absolute;
    display: flex;
    flex-direction: column;
    padding: 0 6px 6px;
    border: 1px solid #47545f;
    border-radius: 7px 7px 4px 4px;
    box-shadow: inset 0 0 0 1px rgba(255, 255, 255, .6), 0 0 3px rgba(0, 0, 0, .3);
    background: rgba(214, 243, 252, .25);
    backdrop-filter: blur(4px);
    overflow: hidden;
}

.titlebar {
    height: 28px;
    flex: none;
    display: flex;
    align-items: center;
    padding-bottom: 2px;
    font: 12px/20px "Open Sans", "Noto Sans CJK SC", sans-serif;
}

.titlebar > svg {
    width: 16px;
    height: 14px;
    margin-right: 5px;
}

.titlebar > span {
    text-shadow: 0 0 6px #fff, 0 0 8px #fff, 0 0 12px #fff;
    white-space: nowrap;
    color: #111;
}

.controls {
    margin: 0 -2px 0 auto;
    align-self: flex-start;
    display: flex;
    border: 1px solid rgba(90, 105, 120, .8);
    border-top: 0;
    border-radius: 0 0 4px 4px;
}

.controls button {
    width: 27px;
    height: 18px;
    border-right: 1px solid rgba(90, 105, 120, .6);
}

.controls svg {
    width: 14px;
    height: 14px;
    display: block;
    margin: 0 auto;
}

.controls .close {
    width: 46px;
    border-right: 0;
    font: bold 13px/17px "Liberation Sans", sans-serif;
    color: #fff;
    text-shadow: 0 0 1px #000, 0 0 2px #222, 0 0 2px #222;
}

.win-body {
    flex: 1;
    min-height: 0;
    display: flex;
    flex-direction: column;
    background: #9cdbda;
    font-family: "Liberation Mono", "Noto Sans CJK SC", monospace;
    font-weight: bold;
    font-size: 15px;
    line-height: 18px;
}

/* raised and sunken Motif parts */
.menubar, .btn, .ib, .opt, .matrix button, .banner div {
    border: 2px solid;
    border-color: #d2f4f3 #527e7e #527e7e #d2f4f3;
}

.btn, .ib, .opt {
    background: #9cdbda;
}

.btn {
    font-family: "Liberation Mono", monospace;
    font-weight: bold;
}

.it {
    font-style: italic;
    font-weight: normal;
}

.bi {
    font-style: italic;
}

.ib {
    width: 29px;
    height: 29px;
    flex: none;
    padding: 1px;
}

.ib svg {
    width: 22px;
    height: 22px;
    display: block;
    margin: 0 auto;
}

.ib.big {
    width: 34px;
}

.ib.big svg {
    width: 26px;
}

.opt {
    position: relative;
    display: flex;
}

.opt select {
    appearance: none;
    width: 100%;
    padding: 0 20px 0 5px;
    outline: 0;
}

.opt::after {
    content: "";
    position: absolute;
    right: 5px;
    top: calc(50% - 3px);
    width: 12px;
    height: 7px;
    border: 2px solid;
    border-color: #d2f4f3 #527e7e #527e7e #d2f4f3;
    pointer-events: none;
}

.field {
    border: 2px solid;
    border-color: #527e7e #d2f4f3 #d2f4f3 #527e7e;
    min-width: 0;
}

.menubar {
    display: flex;
    align-items: center;
    background: #9cdbda;
}

.menubar button, .banner, .list-name {
    font-family: "Liberation Serif", serif;
    font-weight: bold;
    font-size: 14px;
}

.menubar u {
    text-underline-offset: 4px;
}

/* scrollbars */
.sb {
    flex: none;
    display: flex;
    align-items: center;
    background: #84b9b9;
    border: 2px solid;
    border-color: #527e7e #d2f4f3 #d2f4f3 #527e7e;
}

.sb i {
    flex: 1;
    align-self: stretch;
    background: #9cdbda;
    border: 1px solid;
    border-color: #d2f4f3 #527e7e #527e7e #d2f4f3;
}

.sb.green {
    background: #49ad95;
    border-color: #2c7763 #a5eedd #a5eedd #2c7763;
}

.sb.green i {
    background: #55cdb0;
    border-color: #a5eedd #2c7763 #2c7763 #a5eedd;
}

.sb::before, .sb::after {
    content: "";
    width: 10px;
    height: 10px;
    flex: none;
    background: #c2efec;
    clip-path: polygon(50% 0, 100% 100%, 0 100%);
}

.sb.green::before, .sb.green::after {
    background: #8fe3cc;
}

.sb.v {
    width: 14px;
    flex-direction: column;
}

.sb.v::after {
    clip-path: polygon(0 0, 100% 0, 50% 100%);
}

.sb.h {
    height: 14px;
}

.sb.h::before {
    clip-path: polygon(0 50%, 100% 0, 100% 100%);
}

.sb.h::after {
    clip-path: polygon(0 0, 100% 50%, 0 100%);
}

/* graphic editor */
.editor {
    left: 860px;
    top: 46px;
    width: 996px;
    height: 747px;
    padding: 0 5px 6px;
    background: linear-gradient(90deg, rgba(225, 252, 255, .85), rgba(190, 232, 250, .85));
}

.editor .controls {
    margin-right: 1px;
}

.editor .win-body {
    background: #55cdb0;
    border-top: 1px solid #4f7d7d;
}

.editor-top {
    height: 55px;
    flex: none;
    display: flex;
    background: #d2f4f3;
}

.editor .menubar {
    width: 567px;
    flex: none;
    margin: 1px 3px 1px 0;
    padding: 0 13px 2px 14px;
    gap: 18px;
}

.editor .help {
    margin-left: auto;
}

.brandbox {
    flex: 1;
    display: flex;
    align-items: flex-start;
    padding: 8px 0 0 4px;
    background: #9cdbda;
    border: 2px solid #527e7e;
    border-bottom: 0;
    color: #000;
    font-size: 15px;
    line-height: 15px;
}

.brandbox b {
    font-family: "Liberation Serif", serif;
    font-size: 22px;
    margin: 2px 6px 0 0;
}

.frontline {
    width: 160px;
    height: 40px;
}

.editor-mid {
    flex: 1;
    min-height: 0;
    display: flex;
}

.layers {
    width: 155px;
    flex: none;
    display: flex;
    flex-direction: column;
    padding: 3px 3px 0;
}

.info {
    height: 20px;
    margin-bottom: -1px;
    padding-left: 2px;
    border: 1px solid #000;
    background: #9cdbda;
    white-space: nowrap;
    overflow: hidden;
}

.matrix {
    margin: 3px 0 4px;
    padding: 2px;
    border: 1px solid #000;
}

.matrix button {
    display: block;
    width: 100%;
    height: 21px;
    padding-left: 2px;
    text-align: left;
    background: #9cdbda;
    line-height: 16px;
}

.layer-area {
    flex: 1;
    min-height: 0;
    display: flex;
    justify-content: space-between;
    border-top: 2px solid #2c7763;
}

.layer-list {
    width: 125px;
    padding: 4px 0 0 2px;
    border-left: 2px solid #2c7763;
    border-right: 3px solid #a5eedd;
    display: flex;
    flex-direction: column;
    gap: 3px;
    overflow: hidden;
    font-size: 12px;
}

.layer-group {
    flex: none;
    padding: 1px;
    background: #000;
}

.layer-group label {
    display: flex;
    align-items: center;
    height: 16px;
    gap: 2px;
    padding: 1px;
}

.layer-group input {
    appearance: none;
    width: 14px;
    height: 14px;
    flex: none;
    background: #fff;
    border: 2px solid #fff;
    box-shadow: inset 0 0 0 2px #000;
}

.layer-group .cur input {
    border-color: #0a0ac0;
}

.layer-group i {
    width: 14px;
    height: 14px;
}

.layer-group span {
    flex: 1;
    height: 14px;
    padding-left: 1px;
    line-height: 14px;
    background: #9ab4bf;
}

.layer-group .cur span::after {
    content: "⊞";
    float: right;
    font-size: 10px;
}

.layer-group .white { background: #fff; }
.layer-group .mask { background: #00a67c; }
.layer-group .plane { background: #9cdbda; }
.layer-group .signal { background: #fdc64f; }
.layer-group .rout { background: #d9d9d9; }
.swatch-red { background: #f80000; }
.swatch-blue { background: #1a1ae6; }

.layer-area .sb i {
    flex: 0 0 288px;
}

.layer-area .sb::after {
    margin-top: auto;
}

.canvas {
    flex: 1;
    min-width: 0;
    background: #000;
    overflow: hidden;
}

.editor-msg {
    height: 31px;
    flex: none;
    background: #ffffcd;
    border-bottom: 2px solid #000;
}

.editor-foot {
    height: 22px;
    flex: none;
    background: #b5fbfb;
}

/* checklist */
.checklist {
    left: 1521px;
    top: 71px;
    width: 398px;
    height: 640px;
    background: linear-gradient(90deg, rgba(190, 232, 250, .3), rgba(214, 243, 252, .4));
}

.checklist .titlebar {
    height: 29px;
}

.menubar.short {
    align-self: flex-start;
    height: 35px;
    flex: none;
    padding: 0 14px;
    gap: 18px;
    outline: 1px solid #000;
}

.list-name {
    height: 21px;
    flex: none;
    text-align: center;
    line-height: 19px;
    border: 1px solid #000;
    font-size: 15px;
}

.check-area {
    flex: 1;
    min-height: 0;
    display: flex;
    justify-content: space-between;
    padding: 0 3px 0 0;
    background: #55cdb0;
}

.check-list {
    width: 359px;
    padding: 2px 0 0 1px;
    border: 2px solid;
    border-color: #2c7763 #a5eedd #a5eedd #2c7763;
    overflow: hidden;
}

.check-item {
    height: 119px;
    background: #9cdbda;
    border: 1px solid #000;
    border-bottom-width: 2px;
    font-weight: normal;
}

.check-row {
    display: flex;
    align-items: center;
    gap: 4px;
    height: 35px;
    padding: 0 2px 0 3px;
}

.check-row .tick {
    appearance: none;
    width: 13px;
    height: 13px;
    margin-bottom: 8px;
    flex: none;
    border: 1px solid;
    border-color: #527e7e #d2f4f3 #d2f4f3 #527e7e;
}

.check-row .tick::before {
    content: "✔";
    display: block;
    font: bold 13px/11px "DejaVu Sans", sans-serif;
    color: #c00040;
}

.check-row .kind {
    width: 22px;
    height: 22px;
    margin: 0 0 0 14px;
    flex: none;
}

.check-row b {
    flex: 1;
    overflow: hidden;
    white-space: nowrap;
    font-family: "Liberation Serif", serif;
    font-size: 15px;
}

.check-row .btn {
    width: 44px;
    height: 29px;
    flex: none;
    font-weight: normal;
}

.check-row .field {
    width: 106px;
    height: 29px;
    flex: none;
    padding: 0 4px 8px;
}

.check-row .ask {
    width: 29px;
    font: bold 22px/23px "Liberation Sans", sans-serif;
    box-shadow: inset 0 0 0 1px #9cdbda, inset 0 0 0 2px #000;
}

.check-btns {
    display: grid;
    grid-template-columns: repeat(3, 1fr);
    gap: 4px;
    padding: 2px 1px 3px 2px;
}

.check-btns .btn {
    height: 23px;
    line-height: 17px;
    font-family: "Liberation Serif", serif;
    font-size: 15px;
}

.check-run {
    display: flex;
    align-items: center;
    gap: 4px;
    height: 33px;
    padding-left: 2px;
    line-height: 15px;
}

.check-run .ib {
    border-color: #a5eedd #2c7763 #2c7763 #a5eedd;
    background: #55cdb0;
}

.check-run p {
    flex: 1;
    white-space: nowrap;
    text-align: center;
    padding-right: 38px;
}

.check-run strong {
    width: 16px;
    height: 33px;
    text-align: center;
    font: bold 14px/30px "Liberation Sans", sans-serif;
    background: #ff1a1a;
    border: 1px solid #000;
    margin-left: -2px;
}

.check-msg {
    height: 20px;
    padding-left: 3px;
    border-top: 1px solid #000;
    background: #ffffcd;
    line-height: 18px;
}

/* histograms */
.hist {
    width: 478px;
    bottom: 0;
    padding-bottom: 0;
    border-bottom: 0;
    z-index: 2;
}

.hist.one {
    left: 1156px;
    top: 598px;
    z-index: 3;
}

.hist.two {
    left: 1439px;
    top: 482px;
    width: 480px;
}

.hist.one .controls .close {
    background: linear-gradient(#e8a79c, #c9402c 45%, #a82a18 55%, #dd6a50);
    border-radius: 0 0 4px 4px;
}

.hist .win-body {
    padding: 3px 4px 0 3px;
    background: #55cdb0;
    border: 1px solid #000;
    border-bottom: 0;
    overflow: hidden;
}

.hist-top {
    height: 288px;
    flex: none;
    display: flex;
    gap: 2px;
}

.hist-side {
    width: 103px;
    flex: none;
    display: flex;
    flex-direction: column;
    background: #9cdbda;
    border: 1px solid #000;
}

.stats {
    height: 139px;
    padding: 1px 0 0 5px;
    border: 1px solid #000;
    border-bottom-width: 2px;
}

.stats label {
    display: flex;
    align-items: center;
    gap: 7px;
    height: 27px;
}

.stats input {
    appearance: none;
    width: 10px;
    height: 10px;
    margin-left: 1px;
    transform: rotate(45deg);
    border: 2px solid;
    border-color: #d2f4f3 #527e7e #527e7e #d2f4f3;
}

.stats input:checked {
    background: #c00040;
    border-color: #527e7e #d2f4f3 #d2f4f3 #527e7e;
}

.scrolled {
    flex: 1;
    min-height: 0;
    display: flex;
    gap: 4px;
}

.listbox {
    flex: 1;
    min-width: 0;
    padding: 2px 3px;
    border: 2px solid;
    border-color: #527e7e #d2f4f3 #d2f4f3 #527e7e;
    overflow: hidden;
}

.listbox li {
    white-space: nowrap;
    line-height: 18px;
}

.listbox .on {
    color: #9cdbda;
    background: linear-gradient(#000, #000) no-repeat left center / 100% 15px;
}

.hist-btns {
    height: 35px;
    display: flex;
    gap: 5px;
    padding: 2px;
}

.hist-view {
    flex: 1;
    min-width: 0;
    display: flex;
    flex-direction: column;
    background: #9cdbda;
    border: 2px solid;
    border-color: #527e7e #d2f4f3 #d2f4f3 #527e7e;
}

.plot {
    height: 164px;
    flex: none;
    display: flex;
    flex-direction: column;
    align-items: center;
    padding-top: 3px;
    border-top: 1px solid #000;
}

.plot-title {
    height: 22px;
    flex: none;
    padding: 0 3px;
    line-height: 24px;
    font-style: italic;
    white-space: nowrap;
    background: #c2ffff;
    border: 1px solid #000;
    box-shadow: 2px 2px #6d8c8c;
}

.bars {
    flex: 1;
    min-height: 0;
    align-self: stretch;
    display: flex;
    align-items: flex-end;
    padding-left: 3px;
}

.bar {
    width: 56px;
    flex: none;
    margin-right: -1px;
    text-align: center;
    line-height: 15px;
}

.bar div {
    border: 1px solid #000;
    border-bottom: 0;
}

.bar .low {
    color: #e81c1c;
}

.ticks {
    display: flex;
    height: 41px;
    flex: none;
    padding-left: 3px;
    border-top: 4px solid #000;
}

.ticks div {
    width: 56px;
    height: 29px;
    margin: 1px -1px 0 0;
    display: flex;
    justify-content: center;
    white-space: pre;
    line-height: 15px;
    padding-top: 2px;
    border: 1px solid #000;
}

.red { background: #ff1a1a; }
.yellow { background: #ffff1a; }
.lime { background: #1ae61a; }

.hist-low {
    flex: 1;
    min-height: 0;
    display: flex;
    margin-top: 2px;
    border: 1px solid #000;
    border-right-width: 2px;
    border-bottom-width: 2px;
}

.hist-low .scrolled {
    flex: 0 0 91px;
}

.hist.two .hist-low .scrolled {
    flex-basis: 74px;
}

.resolution {
    flex: 1;
    min-width: 0;
    display: flex;
    flex-direction: column;
    padding: 0 3px;
    border-left: 1px solid #000;
}

.resolution label {
    text-align: center;
}

.resolution output {
    padding-left: 23px;
    margin-top: 4px;
}

.resolution input {
    appearance: none;
    width: 100%;
    height: 14px;
    margin-top: 3px;
    background: #84b9b9;
    border: 2px solid;
    border-color: #527e7e #d2f4f3 #d2f4f3 #527e7e;
}

.resolution input::-webkit-slider-thumb {
    appearance: none;
    width: 30px;
    height: 10px;
    border: 1px solid;
    border-color: #d2f4f3 #527e7e #527e7e #d2f4f3;
    background: linear-gradient(90deg, #9cdbda 13px, #527e7e 13px, #d2f4f3 15px, #9cdbda 15px);
}

.sash {
    height: 8px;
    flex: none;
    display: flex;
    justify-content: flex-end;
    padding-right: 5px;
    background: linear-gradient(transparent 3px, #a5eedd 3px, #2c7763 5px, transparent 5px);
}

.sash i {
    width: 10px;
    height: 8px;
    background: #55cdb0;
    border: 1px solid;
    border-color: #a5eedd #2c7763 #2c7763 #a5eedd;
}

.board {
    height: 165px;
    flex: none;
    border: 2px solid;
    border-color: #2c7763 #a5eedd #a5eedd #2c7763;
}

.board svg {
    width: 100%;
    height: 161px;
    display: block;
    outline: 1px solid #000;
}

.hist-foot {
    display: flex;
    flex: none;
    gap: 4px;
    margin-top: 1px;
}

.hist-foot p {
    flex: 1;
    height: 50px;
    padding: 10px 31px 0 0;
    text-align: right;
    border: 1px solid #000;
    background: #9cdbda;
    white-space: nowrap;
}

.hist-foot .ib {
    width: 38px;
    height: 38px;
    margin-top: 1px;
}

.hist-foot .ib svg {
    width: 30px;
    height: 30px;
}

/* results viewer */
.results {
    left: 636px;
    top: 594px;
    width: 511px;
    height: 399px;
    padding: 0 7px 7px;
    z-index: 3;
}

.results .win-body {
    border: 1px solid #000;
}

.results .listbox, .results .rv-main, .results .rv-status {
    background: #55cdb0;
}

.results .listbox {
    border-color: #2c7763 #a5eedd #a5eedd #2c7763;
}

.results .rv-left .listbox {
    padding-top: 0;
}

.results .listbox .on {
    color: #55cdb0;
}

.banner {
    height: 29px;
    flex: none;
    padding: 2px;
    border-bottom: 2px solid #000;
}

.banner div {
    height: 24px;
    line-height: 19px;
    text-align: center;
    font-size: 15px;
    background: #55cdb0;
    border-color: #a5eedd #2c7763 #2c7763 #a5eedd;
}

.rv-main {
    height: 255px;
    flex: none;
    display: flex;
    border-bottom: 1px solid #000;
}

.rv-left {
    width: 171px;
    flex: none;
    display: flex;
    flex-direction: column;
    border-right: 2px solid #000;
}

.rv-head {
    height: 30px;
    flex: none;
    display: flex;
    margin-bottom: 1px;
}

.rv-left .rv-head {
    border-bottom: 1px solid #000;
}

.rv-head .cell {
    display: flex;
    padding: 2px;
}

.rv-head .cell .btn {
    width: 46px;
}

.rv-head .cell:last-child .btn {
    width: 38px;
}

.rv-head b {
    flex: 1;
    line-height: 28px;
    text-align: center;
    font-style: italic;
    border: 2px solid #000;
    border-width: 0 2px;
    background: #9cdbda;
}

.rv-right {
    flex: 1;
    min-width: 0;
    display: flex;
    flex-direction: column;
    padding-left: 1px;
}

.cats {
    background: #9cdbda;
    align-items: center;
}

.cats .btn {
    width: 207px;
    height: 28px;
    padding-top: 2px;
}

.cats .opt {
    width: 61px;
    height: 28px;
    margin-left: auto;
}

.rv-left .sb.h {
    width: 150px;
    margin: 4px 0 1px;
}

.rv-replace {
    height: 32px;
    flex: none;
    padding: 2px 2px 2px 5px;
    border-top: 1px solid #000;
}

.rv-replace .opt {
    height: 28px;
}

.rv-right .sb.h {
    width: 303px;
    margin-top: 4px;
}

.rv-nav {
    display: flex;
    align-items: center;
    gap: 4px;
    height: 27px;
    flex: none;
}

.rv-nav .btn {
    width: 45px;
    height: 24px;
    flex: none;
    line-height: 16px;
}

.rv-nav .btn:first-child {
    width: 54px;
}

.rv-nav .field {
    width: 60px;
    height: 24px;
    padding-left: 6px;
    margin-left: auto;
}

.rv-zoom {
    display: flex;
    height: 33px;
    flex: none;
    align-items: center;
}

.frame {
    display: flex;
    height: 33px;
    padding: 1px 1px 1px 5px;
    border: 1px solid #000;
    align-items: center;
}

.frame .opt {
    width: 116px;
    height: 29px;
}

.frame.sv {
    width: 96px;
    padding: 0;
    background: #9cdbda;
}

.frame .opt.red {
    width: 66px;
    height: 31px;
    margin-left: auto;
    outline: 3px solid #ff1a1a;
    outline-offset: -3px;
    background: #ff1a1a;
}

.frame .opt.red::after {
    right: 8px;
}

.opt.red select {
    padding: 0 0 0 12px;
    color: #300;
}

.show-all {
    display: flex;
    align-items: center;
    gap: 4px;
    margin: 0 0 6px 4px;
    white-space: nowrap;
}

.show-all input {
    appearance: none;
    width: 13px;
    height: 13px;
    border: 1px solid;
    border-color: #a5eedd #2c7763 #2c7763 #a5eedd;
}

.rv-icons {
    display: flex;
    justify-content: flex-end;
    align-items: center;
    gap: 5px;
    height: 35px;
    flex: none;
    padding-right: 2px;
}

.rv-status, .rv-erf {
    height: 21px;
    flex: none;
    line-height: 21px;
    border-bottom: 1px solid #000;
}

.rv-status {
    text-align: center;
}

.rv-erf {
    padding-left: 2px;
    background: #ffffcd;
}

.rv-foot {
    flex: 1;
    display: flex;
    align-items: center;
    gap: 5px;
    padding: 0 1px;
}

.rv-foot > .btn {
    flex: 1;
    height: 30px;
}

.ib.hot {
    box-shadow: inset 0 0 0 3px #e01010;
}
```
FILE: script.js
```javascript
const rows = [
    ['f', ''], ['f', '排板'], ['f', '压合'], ['f', 'X-Ray冲孔'], ['f', '铣边'], ['f', '打字嘜'], ['f', '烘板'],
    ['d', '钻孔'], ['f', '树脂钻孔'],
    ['d', '沉铜1'], ['f', '去毛刺1'], ['f', '沉铜1'],
    ['d', '电镀'], ['f', '板镀'],
    ['d', '外层干膜'], ['f', '外层前处理'], ['f', '贴膜'], ['f', '曝光'], ['f', '显影'],
    ['d', '图形电镀'], ['f', '镀孔'],
    ['d', '外层蚀刻'], ['f', '退膜'],
    ['d', '树脂塞孔'], ['f', '阻焊前处理'], ['f', '树脂塞孔'], ['f', '终固化'],
    ['d', '陶瓷磨板'], ['f', '陶瓷磨板'],
    ['d', 'AOI1'], ['f', '塞孔AOI1'],
    ['d', '内层图形'], ['f', '内层前处理'], ['f', '贴膜'], ['f', '曝光']
];

document.getElementById('process-rows').innerHTML = rows.map(([kind, name], i) => {
    const next = rows[i + 1];
    const line = next && next[0] === 'd' ? 't-end' : 't-tee';
    const icons = kind === 'd'
        ? '<svg class="nodeline"><use href="#t-node"/></svg><svg class="folder"><use href="#i-folder"/></svg>'
        : `<svg class="leafline"><use href="#${line}"/></svg><svg class="file"><use href="#i-file"/></svg>`;
    const cls = i === 0 ? 'cut' : name === '压合' ? 'sel' : '';
    const cells = i === 0 ? ['', '', '', ''] : ['P2', '周磊', '', '已编写'];
    return `<tr class="${cls}"><td><div class="name">${icons}${name}</div></td>${cells.map(c => `<td>${c}</td>`).join('')}</tr>`;
}).join('');

const stack = ['0.33', '2116H-IT-180A', '2116-IT-180A', '4/5L', '2116-IT-180A', '2116H-IT-180A', '0.33'];
document.getElementById('stack-rows').innerHTML = stack.map((s, i) =>
    `<tr><td class="${i === 0 ? 'hot' : ''}">0${i + 1}</td><td>${s}</td></tr>`).join('');

// layer list
const layers = [
    [['to', 'white'], ['ts', 'mask']],
    [['plncs', 'plane']],
    [['cs', 'signal'], ['sig2t', 'signal'], ['sig3t', 'signal'], ['sig4t', 'signal'], ['sig5b', 'signal'], ['sig6b', 'signal'], ['sig7b', 'signal']],
    [['plnss', 'plane']],
    [['ss', 'signal'], ['bs', 'mask'], ['bo', 'white']],
    [['drl', ''], ['laser1-2', ''], ['laser2-3', '', 'swatch-red'], ['drl2-7', ''], ['szdrl3-6', '', 'swatch-blue', 'cur'], ['laser6-7', ''], ['laser7-8', ''], ['rout', 'rout']],
    [['gko', 'plane'], ['map', 'plane'], ['dim', 'plane']]
];
document.getElementById('layer-list').innerHTML = layers.map(group =>
    `<div class="layer-group">${group.map(([name, type, swatch = '', cur = '']) =>
        `<label class="${cur}"><input type="checkbox"><i class="${swatch}"></i><span class="${type}">${name}</span></label>`).join('')}</div>`).join('');

// drill map, origin is the canvas corner
const red = [
    [84, 15], [272, 11], [318, 11], [365, 11], [412, 11], [459, 11],
    [131, 58], [272, 58], [412, 58], [458, 58],
    [84, 104], [131, 104], [272, 105], [412, 105], [459, 105],
    [37, 151], [84, 151], [131, 151], [272, 151], [365, 151], [412, 151], [459, 152],
    [84, 198], [131, 198], [365, 198],
    [84, 245], [131, 245], [178, 245], [225, 245], [272, 245], [318, 245], [416, 242], [460, 246],
    [84, 292], [131, 292], [318, 292], [412, 292],
    [37, 339], [84, 339], [225, 339], [272, 339], [412, 339],
    [37, 386], [84, 386], [131, 386], [272, 386], [412, 386],
    [37, 432], [84, 432], [131, 432], [225, 432], [272, 432], [318, 432], [412, 432],
    [129, 478], [225, 480], [272, 480], [318, 480], [412, 478], [129, 525], [129, 572], [84, 478]
];
const blue = [
    [375, 60], [339, 100], [325, 160], [248, 196], [423, 193], [366, 250], [266, 305], [193, 310], [350, 309],
    [371, 350], [164, 371], [229, 386], [321, 386], [375, 432], [170, 441], [39, 199], [42, 273],
    [494, 59], [494, 116], [491, 172], [500, 230], [376, 475]
];
document.getElementById('drill-map').innerHTML =
    red.map(([x, y]) => `<circle cx="${x}" cy="${y}" r="7" fill="#f80000"/>`).join('') +
    blue.map(([x, y]) => `<circle cx="${x}" cy="${y}" r="11" fill="#1a1ae6"/>`).join('') +
    '<path d="M325 296l14 9" stroke="#fff" stroke-width="6"/>';

// checklist
const checks = [
    ['Drill Checks', 'm-drill', 'Drill (Mil', '0:00:03', '7 drill layers processed'],
    ['Board-Drill Che', 'm-drill', 'Std (Mils)', '0:00:01', '8 layers processed'],
    ['Signal Layer Ch', 'm-signal', 'Inner', '0:00:14', '2 layers were processed']
];
document.getElementById('check-list').innerHTML = checks.map(([name, icon, erf, time, msg]) => `
    <div class="check-item">
        <div class="check-row"><input class="tick" type="checkbox" checked aria-label="${name}"><svg class="kind"><use href="#${icon}"/></svg><b>${name}</b><button class="btn">ERF:</button><input class="field" type="text" value="${erf}" aria-label="ERF"><button class="btn ask">?</button></div>
        <div class="check-btns"><button class="btn">Parameters...</button><button class="btn">Ranges...</button><button class="btn">Online...</button></div>
        <div class="check-run"><button class="ib" aria-label="Run"><svg><use href="#m-run"/></svg></button><button class="ib" aria-label="Run on features"><svg><use href="#m-run2"/></svg></button><button class="ib" aria-label="Run in profile"><svg><use href="#m-run3"/></svg></button><p>28 Oct 2023<br>01:26 PM - ${time}</p><button class="ib" aria-label="Results"><svg><use href="#m-zoom"/></svg></button><strong>!!</strong></div>
        <div class="check-msg">${msg}</div>
    </div>`).join('');

// clusters of violations: x, y, half width, half height, count
const clusters = [
    [196, 34, 4, 5, 8], [204, 39, 4, 2, 5], [240, 34, 4, 5, 12], [192, 54, 9, 6, 35], [200, 68, 14, 8, 45],
    [215, 62, 8, 12, 60], [228, 80, 8, 6, 35], [240, 70, 5, 12, 45], [248, 60, 7, 6, 20], [265, 70, 11, 11, 90],
    [256, 87, 17, 9, 160], [262, 103, 11, 11, 170], [280, 86, 10, 5, 45], [288, 104, 10, 4, 45], [275, 122, 17, 6, 190],
    [236, 117, 9, 8, 40], [212, 113, 5, 9, 20], [190, 117, 8, 7, 40], [294, 60, 8, 7, 22], [308, 60, 5, 4, 12],
    [296, 73, 7, 9, 26], [307, 77, 5, 8, 18], [304, 90, 10, 4, 18], [326, 65, 6, 5, 13], [335, 74, 5, 10, 40],
    [329, 87, 7, 6, 20], [337, 93, 3, 5, 10], [215, 90, 9, 4, 14], [195, 90, 5, 4, 7], [194, 108, 3, 6, 12],
    [326, 23, 1, 1, 1], [340, 26, 1, 1, 1], [219, 41, 1, 1, 1], [294, 48, 1, 1, 1], [335, 114, 1, 1, 1],
    [219, 136, 1, 1, 1], [249, 136, 1, 1, 1], [240, 133, 2, 1, 3], [292, 136, 1, 1, 1], [297, 130, 1, 1, 1], [310, 112, 2, 3, 4]
];

let seed = 7;
function rnd() {
    seed = (seed * 16807) % 2147483647;
    return seed / 2147483647;
}

function scatter(list) {
    let d = '';
    list.forEach(([x, y, rx, ry, n]) => {
        for (let i = 0; i < n; i++) {
            const a = rnd() * Math.PI * 2;
            const r = rnd() * 1.7;
            d += `M${Math.round(x + Math.cos(a) * r * rx)} ${Math.round(y + Math.sin(a) * r * ry)}h2v3h-2z`;
        }
    });
    return `<path d="${d}" fill="#ff00ff"/>`;
}

function histogram(id, h) {
    document.getElementById(id).innerHTML = `
        <div class="titlebar"><svg><use href="#i-x"/></svg><span>Results histogram</span><div class="controls"><button class="close" aria-label="Close">X</button></div></div>
        <div class="win-body">
            <div class="hist-top">
                <div class="hist-side">
                    <div class="stats">${['Count', 'Average', 'Sum', 'Min', 'Max'].map(s => `<label><input type="radio" name="${id}-stat"${s === 'Min' ? ' checked' : ''}>${s}</label>`).join('')}</div>
                    <div class="scrolled"><ul class="listbox"><li class="on">${h.list[0]}</li></ul><div class="sb v"><i></i></div></div>
                    <div class="hist-btns"><button class="ib" aria-label="Delete"><svg><use href="#m-del"/></svg></button><button class="ib" aria-label="Reference"><svg><use href="#m-ref"/></svg></button></div>
                </div>
                <div class="hist-view">
                    <div class="plot">
                        <div class="plot-title">${h.title}</div>
                        <div class="bars">${h.bars.map(([v, height, color], i) => `<div class="bar"><span class="${h.low === i ? 'low' : ''}">${v}</span><div class="${color}" style="height: ${height}px"></div></div>`).join('')}</div>
                    </div>
                    <div class="ticks">${h.bars.map(([v, height, color]) => {
                        const n = Math.floor(v);
                        return `<div class="${color}"><span>${n}-\n ${n + 1}</span></div>`;
                    }).join('')}</div>
                    <div class="sb h"><i></i></div>
                    <div class="hist-low">
                        <div class="scrolled"><ul class="listbox">${h.list.map((s, i) => `<li class="${i ? '' : 'on'}">${s}</li>`).join('')}</ul><div class="sb v"><i></i></div></div>
                        <div class="resolution"><label for="${id}-res">Resolution</label><output>1.0</output><input id="${id}-res" type="range" min="0" max="10" step="0.1" value="1"></div>
                    </div>
                </div>
            </div>
            <div class="sash"><i></i></div>
            <div class="board"><svg><path d="M99 21H312V23H352V141H99z" fill="#9cdbda" stroke="#000" stroke-width="2"/>${scatter(h.spots)}</svg></div>
            <div class="hist-foot"><p>${h.foot}</p><button class="ib" aria-label="Next"><svg><use href="#m-next"/></svg></button><button class="ib" aria-label="Previous"><svg><use href="#m-prev"/></svg></button></div>
        </div>`;
}

histogram('hist-width', {
    title: 'Size(Width) / Min(Width)',
    list: ['Width'],
    bars: [['3.5', 61, 'red'], ['4', 69, 'red'], ['5', 87, 'yellow'], ['6', 104, 'yellow'], ['7.037', 123, 'lime']],
    spots: clusters,
    foot: 'Measurements for 2 layers'
});
histogram('hist-feature', {
    title: 'Size(Feature) / Min(Feature)',
    list: ['Feature', 'Shape'],
    low: 0,
    bars: [['5.6', 75, 'red'], ['6.004', 81, 'red'], ['7.054', 95, 'red'], ['8.05', 109, 'red'], ['9.021', 123, 'red']],
    spots: [[260, 88, 2, 1, 3]],
    foot: 'Measurements for 1 layer'
});
```
